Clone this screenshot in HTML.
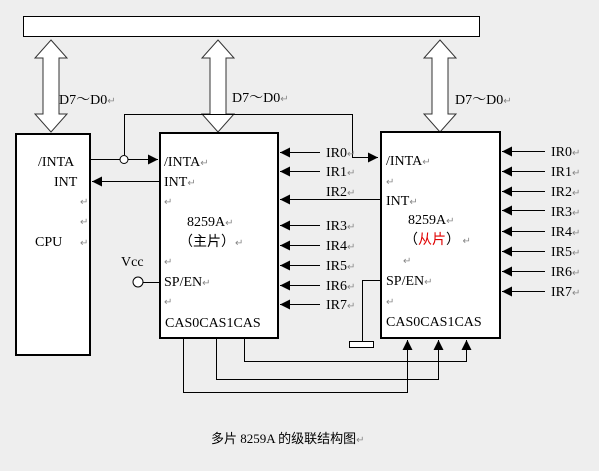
<!DOCTYPE html>
<html><head><style>
html,body{margin:0;padding:0;background:#eeeeee;}
svg{display:block;}
text{font-family:"Liberation Serif","Noto Serif CJK SC",serif;font-size:14px;fill:#000;}
.r{fill:#888;font-size:10px;}
.c{font-family:"Liberation Serif","Noto Sans CJK SC",serif;}
</style></head><body>
<svg width="599" height="471" viewBox="0 0 599 471">
<defs>
<marker id="a" viewBox="0 0 10 10" refX="10" refY="5" markerWidth="10" markerHeight="10" markerUnits="userSpaceOnUse" orient="auto"><path d="M0,0L10,5L0,10z" fill="#000"/></marker>
</defs>
<rect width="599" height="471" fill="#eeeeee"/>
<rect x="23.5" y="16.5" width="456" height="20" fill="#fff" stroke="#000"/>
<g fill="#fff" stroke="#333" stroke-width="1">
<path d="M51,40L67,58H59V114H67L51,132L35,114H43V58H35Z"/>
<path d="M218,40L234,58H226V114H234L218,132L202,114H210V58H202Z"/>
<path d="M440,40L456,58H448V114H456L440,132L424,114H432V58H424Z"/>
</g>
<g fill="#fff" stroke="#000" stroke-width="2">
<rect x="16" y="134" width="74" height="221"/>
<rect x="160" y="133" width="118" height="205"/>
<rect x="381" y="132" width="119" height="206"/>
</g>
<g stroke="#000" stroke-width="1" fill="none">
<path d="M91,159.5H120"/><path d="M128,159.5H158" marker-end="url(#a)"/>
<circle cx="124" cy="159.5" r="4" fill="#fff"/>
<path d="M124.5,155V114.5H352.5V157.5H378" marker-end="url(#a)"/>
<path d="M160,181.5H92" marker-end="url(#a)"/>
<path d="M380,199.5H280" marker-end="url(#a)"/>
<path d="M320,152.5H280" marker-end="url(#a)"/>
<path d="M320,171.5H280" marker-end="url(#a)"/>
<path d="M320,225.5H280" marker-end="url(#a)"/>
<path d="M320,245.5H280" marker-end="url(#a)"/>
<path d="M320,265.5H280" marker-end="url(#a)"/>
<path d="M320,285.5H280" marker-end="url(#a)"/>
<path d="M320,304.5H280" marker-end="url(#a)"/>
<path d="M545,151.5H502" marker-end="url(#a)"/>
<path d="M545,171.5H502" marker-end="url(#a)"/>
<path d="M545,191.5H502" marker-end="url(#a)"/>
<path d="M545,210.5H502" marker-end="url(#a)"/>
<path d="M545,231.5H502" marker-end="url(#a)"/>
<path d="M545,251.5H502" marker-end="url(#a)"/>
<path d="M545,271.5H502" marker-end="url(#a)"/>
<path d="M545,291.5H502" marker-end="url(#a)"/>
<circle cx="138" cy="282" r="5" fill="#fff"/>
<path d="M143,282.5H160"/>
<path d="M381,280.5H362.5V341"/>
<rect x="349.5" y="341.5" width="24" height="6" fill="#fff"/>
<path d="M183.5,338V392.5H407.5V340" marker-end="url(#a)"/>
<path d="M216.5,338V379.5H438.5V340" marker-end="url(#a)"/>
<path d="M244.5,338V361.5H466.5V340" marker-end="url(#a)"/>
</g>
<text x="59" y="104">D7～D0<tspan class="r">↵</tspan></text>
<text x="232" y="102">D7～D0<tspan class="r">↵</tspan></text>
<text x="455" y="104">D7～D0<tspan class="r">↵</tspan></text>
<text x="38" y="166">/INTA</text>
<text x="54" y="186">INT</text>
<text x="80" y="205" class="r">↵</text>
<text x="80" y="225" class="r">↵</text>
<text x="35" y="246">CPU</text>
<text x="80" y="246" class="r">↵</text>
<text x="164" y="166">/INTA<tspan class="r">↵</tspan></text>
<text x="164" y="186">INT<tspan class="r">↵</tspan></text>
<text x="164" y="205" class="r">↵</text>
<text x="187" y="226">8259A<tspan class="r">↵</tspan></text>
<text x="179" y="246" class="c">（主片）<tspan class="r">↵</tspan></text>
<text x="164" y="265" class="r">↵</text>
<text x="164" y="286">SP/EN<tspan class="r">↵</tspan></text>
<text x="164" y="305" class="r">↵</text>
<text x="165" y="327">CAS0CAS1CAS</text>
<text x="121" y="266">Vcc</text>
<text x="167" y="266" class="r"></text>
<text x="326" y="157">IR0<tspan class="r">↵</tspan></text>
<text x="326" y="176">IR1<tspan class="r">↵</tspan></text>
<text x="326" y="196">IR2<tspan class="r">↵</tspan></text>
<text x="326" y="230">IR3<tspan class="r">↵</tspan></text>
<text x="326" y="250">IR4<tspan class="r">↵</tspan></text>
<text x="326" y="270">IR5<tspan class="r">↵</tspan></text>
<text x="326" y="290">IR6<tspan class="r">↵</tspan></text>
<text x="326" y="309">IR7<tspan class="r">↵</tspan></text>
<text x="386" y="165">/INTA<tspan class="r">↵</tspan></text>
<text x="386" y="185" class="r">↵</text>
<text x="386" y="205">INT<tspan class="r">↵</tspan></text>
<text x="408" y="224">8259A<tspan class="r">↵</tspan></text>
<text x="404" y="244" class="c">（<tspan fill="#e00000" style="fill:#e00000">从片</tspan>）<tspan class="r"> ↵</tspan></text>
<text x="403" y="264" class="r">↵</text>
<text x="386" y="285">SP/EN<tspan class="r">↵</tspan></text>
<text x="386" y="305" class="r">↵</text>
<text x="386" y="326">CAS0CAS1CAS</text>
<text x="551" y="156">IR0<tspan class="r">↵</tspan></text>
<text x="551" y="176">IR1<tspan class="r">↵</tspan></text>
<text x="551" y="196">IR2<tspan class="r">↵</tspan></text>
<text x="551" y="216">IR3<tspan class="r">↵</tspan></text>
<text x="551" y="236">IR4<tspan class="r">↵</tspan></text>
<text x="551" y="256">IR5<tspan class="r">↵</tspan></text>
<text x="551" y="276">IR6<tspan class="r">↵</tspan></text>
<text x="551" y="296">IR7<tspan class="r">↵</tspan></text>
<text x="211" y="443" class="c" style="font-size:13px">多片 8259A 的级联结构图<tspan class="r">↵</tspan></text>
</svg>
</body></html>
